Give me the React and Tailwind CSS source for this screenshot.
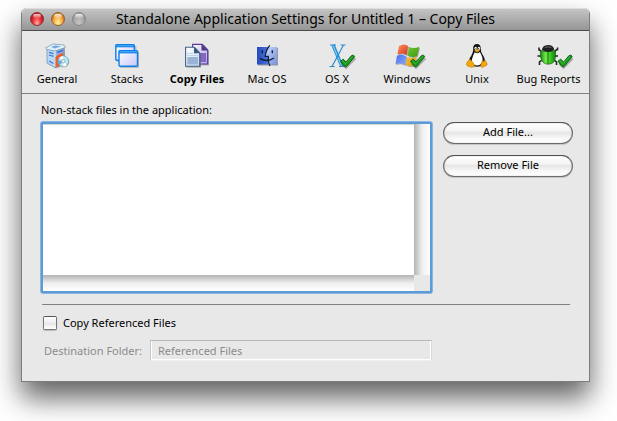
import React from "react";

function Check({ x, y }) {
  return (
    <g transform={`translate(${x} ${y})`}>
      <path d="M1.5 8 L5.5 11.8 L14.3 2.8" fill="none" stroke="#777" strokeOpacity=".55" strokeWidth="3.6" />
      <path d="M0 6.2 L2.7 4.2 L5.6 7 L11 .6 Q13 -.6 14.2 1.4 L6.2 11.4 Q5 12.4 3.8 11.2Z" fill="#1d9a20" stroke="#0a680c" strokeWidth="1" strokeLinejoin="round" />
      <path d="M1.8 5.9 L5 8.6 L11.8 1.6" fill="none" stroke="#41bb3c" strokeWidth=".9" />
    </g>
  );
}

function GeneralIcon() {
  return (
    <svg width="26" height="26" viewBox="0 0 26 26" aria-hidden="true">
      <path d="M4 7 L13 8 L21 6 V22 L13 25.5 L4 21Z" fill="#888" opacity=".5" />
      <path d="M3 6 L11 8 V24.5 L3 20Z" fill="#b5dcf6" stroke="#7393b5" strokeWidth=".8" />
      <path d="M11 8 L20 5 V21 L11 24.5Z" fill="#87b9ee" stroke="#60799c" strokeWidth=".8" />
      <path d="M1.5 5 L9 1 L20 2 L21.5 4.5 L11 8 L3 6.4Z" fill="#dff3fc" stroke="#7f9ab5" strokeWidth=".8" />
      <path d="M7 4 L11 2.4 L17 3.2 L11 5.6Z" fill="#77a5dc" />
      <path d="M5 9.4 L9.5 10.6 M5 12 L9.5 13.4 M5 18 L9.5 20.5" stroke="#4d6fd0" strokeWidth="1.3" />
      <path d="M13 9.5 L19 7.5" stroke="#5b62c9" strokeWidth="1.6" />
      <path d="M11 8 V24" stroke="#f5fcff" strokeWidth="1.2" />
      <path d="M11.5 14.5 Q12.5 12 19 9.8 V22 L11.5 24Z" fill="#f35b21" />
      <circle cx="19.8" cy="18.9" r="5.5" fill="#8b8b8b" opacity=".6" />
      <circle cx="19.2" cy="18.2" r="5.3" fill="#b8e8fa" stroke="#679ec2" strokeWidth=".7" />
      <path d="M19.2 18.2 L15.5 14.5 A5.3 5.3 0 0 1 19.2 12.9Z M19.2 18.2 L22.9 21.9 A5.3 5.3 0 0 1 19.2 23.5Z" fill="#fff" />
      <path d="M19.2 18.2 L14 17.2 A5.3 5.3 0 0 0 15.5 21.9Z" fill="#54aee2" />
      <circle cx="19.2" cy="18.2" r="1.8" fill="#eee" stroke="#8fa6a0" strokeWidth=".8" />
    </svg>
  );
}

function StacksIcon() {
  return (
    <svg width="26" height="26" viewBox="0 0 26 26" aria-hidden="true">
      <defs>
        <linearGradient id="stack" x2="1" y2="1"><stop stopColor="#fff" /><stop offset="1" stopColor="#c7c4f7" /></linearGradient>
      </defs>
      <rect x="3" y="3" width="19.5" height="16" rx="1" fill="#888" opacity=".5" />
      <rect x="1.8" y="1.8" width="18.5" height="15.5" rx="1" fill="url(#stack)" stroke="#1180e8" strokeWidth="1.4" />
      <path d="M1.8 3 H20.3" stroke="#1180e8" strokeWidth="2.6" /><path d="M2.5 2.8 H19.5" stroke="#63bdff" strokeWidth=".8" />
      <rect x="6" y="9" width="19" height="15.7" rx="1" fill="#888" opacity=".6" />
      <rect x="5" y="7.7" width="18.5" height="15.5" rx="1" fill="url(#stack)" stroke="#1180e8" strokeWidth="1.4" />
      <path d="M5 9 H23.5" stroke="#1180e8" strokeWidth="2.8" /><path d="M6 8.8 H23" stroke="#63bdff" strokeWidth=".8" />
    </svg>
  );
}

function CopyIcon() {
  return (
    <svg width="26" height="26" viewBox="0 0 26 26" aria-hidden="true">
      <defs>
        <linearGradient id="page" x2="1" y2="1"><stop stopColor="#fff" /><stop offset="1" stopColor="#c6dbf1" /></linearGradient>
        <linearGradient id="violet" x2="1" y2="1"><stop stopColor="#fff" /><stop offset="1" stopColor="#ae9be0" /></linearGradient>
      </defs>
      <path d="M10 2 H20 L25 8 V22.5 H10Z" fill="#777" opacity=".5" />
      <path d="M8.7 1.3 H18.3 L23.7 7 V21 H8.7Z" fill="url(#violet)" stroke="#57399a" strokeWidth="1.2" />
      <path d="M17.5 1.3 V7.4 H23.7Z" fill="#4c3585" /><path d="M14 10 H22 V19 H14Z" fill="#8168c3" />
      <path d="M2.5 5 H12 L17 11 V24.5 H2.5Z" fill="#666" opacity=".6" />
      <path d="M1.6 4.3 H10.5 L15.7 10 V23.3 H1.6Z" fill="url(#page)" stroke="#426188" strokeWidth="1.1" />
      <path d="M10 4.3 V10.2 H15.7Z" fill="#38577e" />
      <path d="M3 10.5 H9 M3 12.5 H14" stroke="#c3d4e6" /><path d="M3.3 14 H14 V21.5 H3.3Z" fill="#9ab3d6" />
    </svg>
  );
}

function MacIcon() {
  return (
    <svg width="26" height="26" viewBox="0 0 26 26" aria-hidden="true">
      <defs>
        <linearGradient id="face" x2="1"><stop stopColor="#244abd" /><stop offset="1" stopColor="#6d93ed" /></linearGradient>
        <linearGradient id="cheek" x2="1" y2="1"><stop stopColor="#c4d6fb" /><stop offset="1" stopColor="#7a92db" /></linearGradient>
      </defs>
      <rect x="4" y="5" width="20" height="17.5" fill="#777" opacity=".7" />
      <rect x="3" y="4" width="20" height="17.5" fill="url(#face)" />
      <path d="M14.6 4 Q12 8 11.6 13 H14.3 V21.5 H23 V4Z" fill="url(#cheek)" />
      <path d="M15.8 2.3 Q11.8 7 11.2 13.4 H14.3 Q14 19 15.8 23" fill="none" stroke="#121b37" strokeWidth="1.2" />
      <path d="M8.3 7.3 V10.2 M18.3 7.3 V10.2 M6 15.4 Q12.5 19.8 20 15" fill="none" stroke="#101936" strokeWidth="1.3" />
    </svg>
  );
}

function OsxIcon() {
  return (
    <svg width="38" height="26" viewBox="0 0 38 26" aria-hidden="true">
      <path d="M15 2 L24 23.5" stroke="#2a93da" strokeWidth="3.3" />
      <path d="M15 2.5 L23.5 23" stroke="#8cd0f5" strokeWidth="1" />
      <path d="M25.5 2 L14 23.5 M12 2 H18 M22.5 2 H27.5 M11.5 23.5 H16.5 M21 23.5 H27" stroke="#2589ce" strokeWidth="1.1" />
      <Check x={22.5} y={12} />
    </svg>
  );
}

function WindowsIcon() {
  return (
    <svg width="38" height="26" viewBox="0 0 38 26" aria-hidden="true">
      <defs>
        <linearGradient id="red" x2="1" y2="1"><stop stopColor="#ff9267" /><stop offset="1" stopColor="#d83413" /></linearGradient>
        <linearGradient id="green" x2="1" y2="1"><stop stopColor="#72c837" /><stop offset="1" stopColor="#3c990d" /></linearGradient>
        <linearGradient id="blue" x2="1" y2="1"><stop stopColor="#426ff0" /><stop offset="1" stopColor="#8ea9f9" /></linearGradient>
        <linearGradient id="yellow" x2="1" y2="1"><stop stopColor="#f7bf36" /><stop offset="1" stopColor="#dc9809" /></linearGradient>
      </defs>
      <g transform="translate(2 0)">
        <path d="M10 4 Q15 1 19 4 L17.5 13 Q13 10.3 8.5 12.5Z M20 5 Q25 7 30 4.7 L28 14 Q23 16 18.5 13.5Z M8 14 Q13 11.5 17.3 14.3 L15.8 23 Q11 20 6.5 22.2Z M18.4 15 Q23 17 27.6 15.3 L26 23 Q21 25 16.8 23Z" fill="#666" opacity=".5" />
        <path d="M9 3 Q14 0 18 3 L16.5 12 Q12 9.3 7.4 11.5Z" fill="url(#red)" />
        <path d="M19 4 Q24 6 29.3 3.7 L27 13 Q22 15 17.5 12.5Z" fill="url(#green)" />
        <path d="M7 12.8 Q12 10.5 16.3 13.3 L14.8 22 Q10 19 5.4 21.2Z" fill="url(#blue)" />
        <path d="M17.3 14 Q22 16 26.6 14.3 L25 22 Q20 24 15.8 22Z" fill="url(#yellow)" />
      </g>
      <Check x={22.5} y={12} />
    </svg>
  );
}

function UnixIcon() {
  return (
    <svg width="26" height="26" viewBox="0 0 26 26" aria-hidden="true">
      <path d="M9.2 5 Q9.2 1 13 1 Q16.5 1 16.7 5 Q16.6 9 18.8 12 Q21.8 16 20.5 21 Q16 25 9 23 Q3.8 20 5.7 15 Q9.5 10 9.2 5Z" fill="#151515" />
      <path d="M10.7 9.3 Q13.5 11.2 15.8 9 Q19 14 18.5 18 Q17.3 22.5 12.5 22.5 Q7.6 21.6 7.8 17 Q8.7 13 10.7 9.3Z" fill="#fff" />
      <ellipse cx="11.7" cy="5.3" rx="1.2" ry="1.6" fill="#fff" /><ellipse cx="14.9" cy="5.3" rx="1.2" ry="1.6" fill="#fff" />
      <circle cx="12" cy="5.5" r=".5" /><circle cx="14.6" cy="5.5" r=".5" />
      <path d="M10.5 7.6 Q13 5.2 15.8 7.5 L13 9.4Z" fill="#f4ab1b" stroke="#b87b10" strokeWidth=".4" />
      <path d="M5.5 16.3 Q8.5 18 10.6 22 Q10.5 24.6 7.5 24.3 L3 22.8 Q1.9 21.5 3 19.2Z M18.2 17.8 Q20 19 21.2 17.4 L23.3 21 Q23.3 22.5 20.6 23.3 Q17.7 25.5 16.6 23.3Z" fill="#f3a70d" stroke="#c67b07" strokeWidth=".6" />
    </svg>
  );
}

function BugIcon() {
  return (
    <svg width="48" height="26" viewBox="0 0 48 26" aria-hidden="true">
      <defs>
        <linearGradient id="shell"><stop stopColor="#168812" /><stop offset=".35" stopColor="#77e64c" /><stop offset=".6" stopColor="#43cf27" /><stop offset="1" stopColor="#117d0d" /></linearGradient>
      </defs>
      <g transform="translate(12.5 0)">
        <path d="M4 8 L1.5 7 V4.5 M17 8 L20 6.5 V4.5 M4 13 H0 M17 13 H20.5 M4.5 17 L2 19 V22 M16.5 17 L19 19 V22" fill="none" stroke="#20251f" strokeWidth="1.6" />
        <path d="M3 8 H18 Q18.6 16.5 15.8 19.5 Q10.6 23 5.8 19.5 Q2.2 16 3 8Z" fill="url(#shell)" stroke="#16630f" strokeWidth=".7" />
        <path d="M10.5 8 V21" stroke="#147c0e" strokeWidth="1.1" />
        <path d="M4.4 7 Q5 2.2 10.5 2 Q16.2 2 16.7 7 Q10.5 10.8 4.4 7Z" fill="#1d211f" />
        <path d="M7.4 4.6 Q10.4 2.8 13.8 4.6" fill="none" stroke="#67706b" />
      </g>
      <Check x={33} y={12} />
    </svg>
  );
}

const tabs = [
  ["General", GeneralIcon],
  ["Stacks", StacksIcon],
  ["Copy Files", CopyIcon],
  ["Mac OS", MacIcon],
  ["OS X", OsxIcon],
  ["Windows", WindowsIcon],
  ["Unix", UnixIcon],
  ["Bug Reports", BugIcon],
];

const lights = [
  ["Close", "border-[#8c3030] bg-[radial-gradient(ellipse_at_50%_85%,#ffb0a6_0%,#ee3f46_40%,#b90e1c_80%)]"],
  ["Minimize", "border-[#96602b] bg-[radial-gradient(ellipse_at_50%_85%,#fff39b_0%,#f6b650_45%,#c7641c_85%)]"],
  ["Zoom", "border-[#858585] bg-[radial-gradient(ellipse_at_50%_85%,#c5c5c5_0%,#acacac_50%,#959595_85%)]"],
];

function PushButton({ children }) {
  return (
    <button className="h-[22px] w-full rounded-full border border-[#6c6c6c] border-t-[#505050] bg-[linear-gradient(#ffffff_0%,#f3f3f3_40%,#e6e6e6_48%,#fafafa_80%,#ffffff_100%)] pb-[3px] leading-4 shadow-[inset_0_0_1px_#777777,0_1px_0_#c6c6c6]">
      {children}
    </button>
  );
}

export default function App() {
  return (
    <div className="h-screen overflow-hidden bg-white pt-2 pr-[27px] pl-[21px] font-['Noto_Sans',sans-serif] text-[11px] text-black">
      <main className="rounded-t-md border border-t-0 border-[#7d7d7d] bg-[#e8e8e8] shadow-[0_16px_28px_rgba(0,0,0,0.62)]">
        <header className="grid h-[23px] grid-cols-[83px_1fr_83px] items-center rounded-t-[5px] border-b border-[#4c4c4c] bg-linear-to-b from-[#c6c6c6] to-[#969696] shadow-[inset_0_1px_0_#dddddd]">
          <div className="flex gap-[7px] pl-2">
            {lights.map(([name, color]) => (
              <button key={name} aria-label={name} className={`flex h-[14px] w-[14px] justify-center rounded-full border pt-px ${color}`}>
                <span className="h-1 w-2 rounded-full bg-linear-to-b from-white/80 to-white/10" />
              </button>
            ))}
          </div>
          <h1 className="text-center text-[14px] leading-5 whitespace-nowrap">Standalone Application Settings for Untitled 1 – Copy Files</h1>
        </header>

        <nav className="grid h-[63px] grid-cols-[repeat(7,70px)_1fr] border-b border-[#808080] pt-3 pr-1">
          {tabs.map(([name, Icon]) => (
            <button key={name} className={`flex flex-col items-center gap-[2px] leading-4 whitespace-nowrap ${name === "Copy Files" ? "font-bold" : ""}`}>
              <Icon />
              {name}
            </button>
          ))}
        </nav>

        <section className="pt-2 pr-4 pb-5 pl-[18px]">
          <label htmlFor="files" className="block h-[19px] pl-px leading-4">Non-stack files in the application:</label>
          <div className="flex items-start gap-[10px]">
            <div className="h-[173px] flex-1 rounded-[3px] border border-[#8ab6e2] bg-[#5c9bd5]">
              <div className="grid h-full grid-cols-[1fr_16px] grid-rows-[1fr_16px] rounded-[2px] border-2 border-[#5c9bd5] bg-white">
                <select id="files" multiple className="appearance-none overflow-hidden border-t border-[#d4d4d4] bg-white outline-none" />
                <div className="bg-linear-to-r from-[#b4b4b4] via-[#eeeeee] to-white" />
                <div className="bg-linear-to-b from-[#b4b4b4] via-[#eeeeee] to-white" />
                <div className="bg-[#e8e8e8]" />
              </div>
            </div>
            <div className="flex w-[130px] flex-col gap-[11px] pt-px">
              <PushButton>Add File...</PushButton>
              <PushButton>Remove File</PushButton>
            </div>
          </div>

          <hr className="mt-[10px] mr-[3px] ml-[2px] border-[#808080]" />

          <label className="mt-[10px] flex items-center gap-[6px] pl-[3px] leading-4">
            <input type="checkbox" className="h-[14px] w-[14px] appearance-none rounded-[2px] border border-[#777777] border-t-[#555555] bg-[linear-gradient(#ffffff_0%,#eeeeee_50%,#e5e5e5_51%,#ffffff_100%)] shadow-[0_1px_1px_#bbbbbb]" />
            Copy Referenced Files
          </label>
          <div className="mt-[9px] mr-[141px] flex items-center gap-1 text-[#8b8b8b]">
            <label htmlFor="destination" className="w-[106px] pl-1 leading-4 whitespace-nowrap">Destination Folder:</label>
            <input id="destination" disabled defaultValue="Referenced Files" className="h-[21px] min-w-0 flex-1 border border-t-[#b8b8b8] border-r-[#dadada] border-b-[#f0f0f0] border-l-[#c8c8c8] bg-[#e8e8e8] px-[7px] leading-4 text-[#8b8b8b] shadow-[inset_-1px_-1px_0_#ffffff,inset_1px_0_0_#ffffff]" />
          </div>
        </section>
      </main>
    </div>
  );
}
